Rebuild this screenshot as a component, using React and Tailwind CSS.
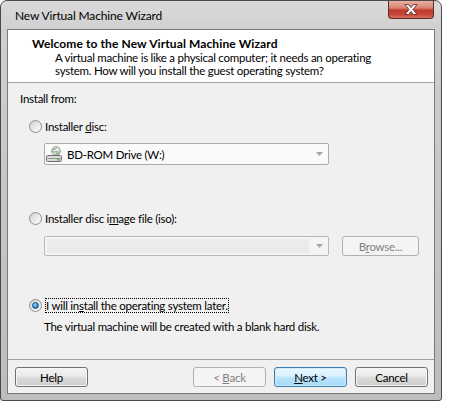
import React from "react";

function Radio({ checked }) {
  return (
    <div className="w-[13px] h-[13px] rounded-full border border-[#8e8f8f] bg-gradient-to-br from-[#cfd0d1] via-[#e9e9e9] to-[#fbfbfb] flex items-center justify-center shrink-0">
      {checked && (
        <div className="w-[7px] h-[7px] rounded-full border border-[#1e4f7a] bg-[radial-gradient(circle_at_40%_35%,#a8dcff_0%,#3c9be0_45%,#135a9a_100%)]" />
      )}
    </div>
  );
}

function Arrow() {
  return (
    <svg width="7" height="4" viewBox="0 0 7 4" className="block">
      <path d="M0 0 L7 0 L3.5 4 Z" fill="#a6a6a6" />
    </svg>
  );
}

function DriveIcon() {
  return (
    <svg width="16" height="16" viewBox="0 0 16 16" className="block">
      <circle cx="10" cy="5" r="4.3" fill="#e8e8e8" stroke="#7a7a7a" strokeWidth="0.8" />
      <path d="M7 3.2 C8.5 4 9.5 3 10.5 1.5 M6.3 5.5 C8 6.5 10 5.5 13.5 6.2 M9.5 9 C10 7.5 11.5 7 12.8 8" stroke="#5a9a5a" strokeWidth="0.9" fill="none" />
      <rect x="0.5" y="9.5" width="15" height="6" rx="1.2" fill="#d9d9d9" stroke="#6e6e6e" />
      <rect x="1.5" y="12" width="13" height="1" fill="#9a9a9a" />
      <rect x="11" y="13.2" width="2.5" height="1.3" fill="#2fbf2f" />
    </svg>
  );
}

function Button({ children, variant }) {
  if (variant === "disabled") {
    return (
      <div className="w-[73px] h-[20px] rounded-[3px] border border-[#adb2b5] bg-[#f4f4f4] flex items-center justify-center text-[#838383]">
        {children}
      </div>
    );
  }
  if (variant === "default") {
    return (
      <div className="w-[73px] h-[20px] rounded-[3px] border border-[#3c7fb1] p-[1px] bg-[#cfeafa]">
        <div className="w-full h-full rounded-[2px] bg-[linear-gradient(to_bottom,#eaf6fd_0%,#d9f0fc_45%,#bee6fd_50%,#a7d9f5_100%)] flex items-center justify-center text-black">
          {children}
        </div>
      </div>
    );
  }
  return (
    <div className="w-[73px] h-[20px] rounded-[3px] border border-[#707070] p-[1px] bg-[#f6f6f6]">
      <div className="w-full h-full rounded-[2px] bg-[linear-gradient(to_bottom,#f2f2f2_0%,#ebebeb_45%,#dddddd_50%,#cfcfcf_100%)] flex items-center justify-center text-black">
        {children}
      </div>
    </div>
  );
}

export default function App() {
  return (
    <div className="w-[457px] h-[409px] bg-white font-['Lato',sans-serif] text-[11.5px] tracking-[-0.25px] leading-[15px] text-black">
      <div className="relative w-[442px] h-[401px] rounded-t-[7px] rounded-b-[3px] border border-[#4a4a4a] bg-[linear-gradient(to_bottom,#dadada_0%,#cfcfcf_8%,#c6c6c6_50%,#bdbdbd_100%)] flex flex-col px-[6px] pb-[6px]">
        <div className="h-[28px] shrink-0 flex items-start pl-[8px] pt-[7px]">
          <span className="text-[12px] tracking-[-0.15px]">New Virtual Machine Wizard</span>
        </div>
        <div className="absolute left-[387px] top-0 w-[46px] h-[18px] rounded-b-[4px] border border-t-0 border-[#5b2a25] bg-[linear-gradient(to_bottom,#eab0a4_0%,#d88474_40%,#c0392b_55%,#c9483a_80%,#d86c5c_100%)] flex items-center justify-center">
          <svg width="14" height="11" viewBox="0 0 14 11">
            <path d="M1 0.5 H4.5 L7 3.5 L9.5 0.5 H13 L9 5.5 L13 10.5 H9.5 L7 7.5 L4.5 10.5 H1 L5 5.5 Z" fill="#ffffff" stroke="#4a2320" strokeWidth="0.8" />
          </svg>
        </div>

        <div className="flex-1 border border-[#7a7a7a] bg-[#f0f0f0] flex flex-col">
          <div className="h-[52px] bg-white pt-[6px] shrink-0 whitespace-nowrap">
            <div className="pl-[24px] font-bold text-[12px] tracking-[0.1px]">Welcome to the New Virtual Machine Wizard</div>
            <div className="pl-[47px] mt-[1px] leading-[12.5px]">
              A virtual machine is like a physical computer; it needs an operating
              <br />
              system. How will you install the guest operating system?
            </div>
          </div>
          <div className="h-px bg-[#a0a0a0] shrink-0" />
          <div className="flex-1 flex flex-col pt-[8px] whitespace-nowrap">
            <div className="pl-[12px] h-[15px]">Install from:</div>
            <div className="mt-[12px] h-[16px] pl-[21px] flex items-center gap-[3px]">
              <Radio />
              <span>
                Installer <u>d</u>isc:
              </span>
            </div>
            <div className="mt-[9px] ml-[36px] w-[285px] h-[22px] rounded-[2px] border border-[#acacac] bg-[#fafafa] flex items-center pl-[1px] pr-[5px]">
              <DriveIcon />
              <span className="ml-[5px] flex-1">BD-ROM Drive (W:)</span>
              <Arrow />
            </div>
            <div className="mt-[45px] h-[16px] pl-[21px] flex items-center gap-[3px]">
              <Radio />
              <span>
                Installer disc i<u>m</u>age file (iso):
              </span>
            </div>
            <div className="mt-[10px] ml-[36px] flex items-center">
              <div className="w-[285px] h-[20px] rounded-[2px] border border-[#b8b8b8] bg-[#f4f4f4] flex items-center p-[2px] pr-[5px]">
                <div className="flex-1 h-full bg-[#ebebeb]" />
                <div className="w-[14px] flex justify-end">
                  <Arrow />
                </div>
              </div>
              <div className="ml-[13px] w-[77px] h-[20px] rounded-[3px] border border-[#adb2b5] bg-[#f4f4f4] flex items-center justify-center text-[#838383]">
                <span>
                  B<u>r</u>owse...
                </span>
              </div>
            </div>
            <div className="mt-[41px] h-[16px] pl-[21px] flex items-center gap-[3px]">
              <Radio checked />
              <span className="outline outline-1 outline-dotted outline-black -outline-offset-1 px-[1px]">
                I will in<u>s</u>tall the operating system later.
              </span>
            </div>
            <div className="mt-[6px] pl-[36px] h-[15px]">
              The virtual machine will be created with a blank hard disk.
            </div>
          </div>
          <div className="h-px bg-[#a0a0a0] shrink-0" />
          <div className="h-[33px] shrink-0 flex items-start pt-[7px] pl-[7px] pr-[6px]">
            <Button>Help</Button>
            <div className="flex-1" />
            <Button variant="disabled">
              <span>
                &lt;&nbsp;<u>B</u>ack
              </span>
            </Button>
            <div className="ml-[8px]">
              <Button variant="default">
                <span>
                  <u>N</u>ext&nbsp;&gt;
                </span>
              </Button>
            </div>
            <div className="ml-[8px]">
              <Button>Cancel</Button>
            </div>
          </div>
        </div>
      </div>
    </div>
  );
}
